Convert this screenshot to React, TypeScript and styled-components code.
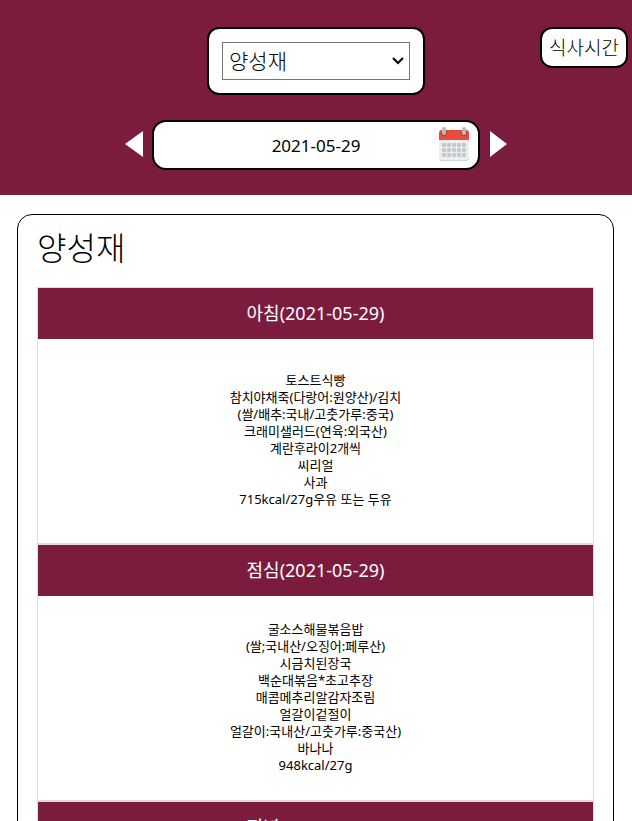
import React, { useState } from "react";
import styled, { createGlobalStyle } from "styled-components";

const MAROON = "#7b1c3e";
const LINE = "#dddddd";

const GlobalStyle = createGlobalStyle`
  *, *::before, *::after { box-sizing: border-box; }
  body {
    margin: 0;
    background: #ffffff;
    color: #000000;
    font-family: "Noto Sans", "Noto Sans CJK KR", sans-serif;
  }
  button, input, select { font: inherit; color: inherit; }
`;

const Page = styled.div`
  height: 100vh;
  overflow: hidden;
`;

const Header = styled.header`
  padding: 27px 4px 25px;
  background: ${MAROON};
`;

const TopRow = styled.div`
  display: grid;
  grid-template-columns: 1fr auto 1fr;
  align-items: start;
`;

const SelectBox = styled.div`
  grid-column: 2;
  padding: 13px;
  background: #ffffff;
  border: 2px solid #000000;
  border-radius: 12px;
`;

const SelectFrame = styled.div`
  display: grid;
  align-items: center;
  width: 188px;
  height: 38px;
  border: 1px solid #767676;
`;

const Select = styled.select`
  grid-area: 1 / 1;
  width: 100%;
  height: 36px;
  padding: 0 24px 0 6px;
  appearance: none;
  background: transparent;
  border: 0;
  font-size: 21px;
  font-weight: 300;
  line-height: 36px;
`;

const Chevron = styled.svg`
  grid-area: 1 / 1;
  justify-self: end;
  margin-right: 5px;
  pointer-events: none;
`;

const TimeButton = styled.button`
  justify-self: end;
  height: 41px;
  padding: 0 7px;
  background: #ffffff;
  border: 2px solid #000000;
  border-radius: 12px;
  font-size: 19px;
  font-weight: 300;
  line-height: 36px;
  white-space: nowrap;
`;

const DateRow = styled.div`
  display: flex;
  align-items: center;
  justify-content: center;
  gap: 9px;
  margin-top: 25px;
`;

const IconButton = styled.button`
  display: flex;
  padding: 0;
  background: none;
  border: 0;
  cursor: pointer;
`;

const DateBox = styled.div`
  display: grid;
  grid-template-columns: 32px 1fr 32px;
  align-items: center;
  width: 328px;
  height: 50px;
  padding: 0 8px;
  background: #ffffff;
  border: 2px solid #000000;
  border-radius: 14px;
`;

const DateInput = styled.input`
  grid-column: 2;
  width: 100%;
  padding: 0;
  background: none;
  border: 0;
  font-size: 17px;
  text-align: center;
`;

const Card = styled.main`
  margin: 19px 18px 19px 17px;
  padding: 9px 19px 19px;
  border: 1px solid #000000;
  border-radius: 15px;
`;

const Title = styled.h1`
  margin: 0 0 15px;
  font-size: 32px;
  font-weight: 300;
  line-height: 48px;
`;

const Meal = styled.section`
  border: 1px solid ${LINE};
`;

const MealHeading = styled.h2`
  margin: 0;
  background: ${MAROON};
  color: #ffffff;
  font-size: 18px;
  font-weight: 400;
  line-height: 51px;
  text-align: center;
`;

const Dishes = styled.ul`
  display: flex;
  flex-direction: column;
  justify-content: center;
  min-height: 204px;
  margin: 0;
  padding: 0 0 2px;
  list-style: none;
  font-size: 13px;
  font-weight: 400;
  line-height: 17px;
  text-align: center;
`;

const meals = [
  {
    name: "아침",
    dishes: [
      "토스트식빵",
      "참치야채죽(다랑어:원양산)/김치",
      "(쌀/배추:국내/고춧가루:중국)",
      "크래미샐러드(연육:외국산)",
      "계란후라이2개씩",
      "씨리얼",
      "사과",
      "715kcal/27g우유 또는 두유",
    ],
  },
  {
    name: "점심",
    dishes: [
      "굴소스해물볶음밥",
      "(쌀;국내산/오징어:페루산)",
      "시금치된장국",
      "백순대볶음*초고추장",
      "매콤메추리알감자조림",
      "얼갈이겉절이",
      "얼갈이:국내산/고춧가루:중국산)",
      "바나나",
      "948kcal/27g",
    ],
  },
  { name: "저녁", dishes: [] },
];

function CalendarIcon() {
  return (
    <svg width="32" height="36" viewBox="0 1 32 36" aria-hidden="true">
      <rect x="1" y="5" width="30" height="30" rx="3" fill="#cfd6da" />
      <path d="M1 13h30v18a3 3 0 0 1-3 3H4a3 3 0 0 1-3-3z" fill="#eceff1" />
      <path d="M1 14V7a3 3 0 0 1 3-3h24a3 3 0 0 1 3 3v7z" fill="#e84c3d" />
      <circle cx="6" cy="7" r="3" fill="#bd3b30" />
      <circle cx="26" cy="7" r="3" fill="#bd3b30" />
      <rect x="4" y="1" width="4" height="8" rx="2" fill="#b3bdc2" />
      <rect x="24" y="1" width="4" height="8" rx="2" fill="#b3bdc2" />
      {[17, 22, 27].map((y) =>
        [4, 9, 14, 19, 24].map((x) => (
          <rect key={`${x}-${y}`} x={x} y={y} width="4" height="4" rx="1" fill="#c2c8cc" />
        ))
      )}
    </svg>
  );
}

export default function App() {
  const [hall, setHall] = useState("양성재");
  const [date, setDate] = useState("2021-05-29");

  const shiftDay = (days: number) => {
    const next = new Date(`${date}T00:00:00Z`);
    if (Number.isNaN(next.getTime())) return;
    next.setUTCDate(next.getUTCDate() + days);
    setDate(next.toISOString().slice(0, 10));
  };

  return (
    <Page>
      <GlobalStyle />
      <Header>
        <TopRow>
          <SelectBox>
            <SelectFrame>
              <Select aria-label="생활관" value={hall} onChange={(e) => setHall(e.target.value)}>
                <option>양성재</option>
              </Select>
              <Chevron width="12" height="8" viewBox="0 0 12 8" aria-hidden="true">
                <path d="M1 1l5 5 5-5" fill="none" stroke="#000000" strokeWidth="2" />
              </Chevron>
            </SelectFrame>
          </SelectBox>
          <TimeButton type="button">식사시간</TimeButton>
        </TopRow>
        <DateRow>
          <IconButton type="button" aria-label="이전 날짜" onClick={() => shiftDay(-1)}>
            <svg width="18" height="28" viewBox="0 1 18 28" aria-hidden="true">
              <path d="M18 1v26L0 14z" fill="#ffffff" />
            </svg>
          </IconButton>
          <DateBox>
            <DateInput aria-label="날짜" value={date} onChange={(e) => setDate(e.target.value)} />
            <IconButton type="button" aria-label="달력 열기">
              <CalendarIcon />
            </IconButton>
          </DateBox>
          <IconButton type="button" aria-label="다음 날짜" onClick={() => shiftDay(1)}>
            <svg width="18" height="28" viewBox="0 1 18 28" aria-hidden="true">
              <path d="M1 1v26l17-13z" fill="#ffffff" />
            </svg>
          </IconButton>
        </DateRow>
      </Header>
      <Card>
        <Title>{hall}</Title>
        {meals.map((meal) => (
          <Meal key={meal.name}>
            <MealHeading>
              {meal.name}({date})
            </MealHeading>
            <Dishes>
              {meal.dishes.map((dish) => (
                <li key={dish}>{dish}</li>
              ))}
            </Dishes>
          </Meal>
        ))}
      </Card>
    </Page>
  );
}
